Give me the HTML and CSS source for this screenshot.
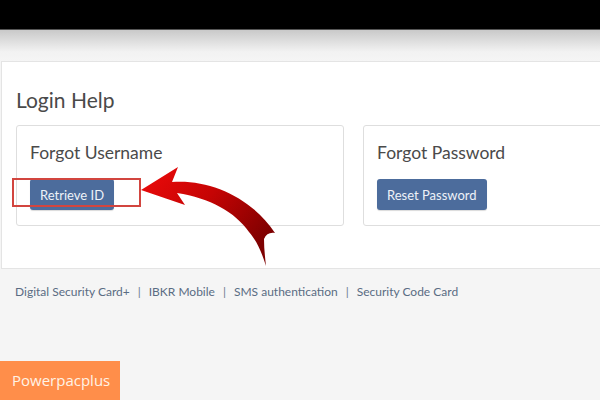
FILE: index.html
```html
<!DOCTYPE html>
<html>
<head>
<meta charset="utf-8">
<link rel="stylesheet" href="styles.css">
</head>
<body>
<header class="topbar"></header>
<div class="shade"></div>
<section class="panel">
  <h1 class="title">Login Help</h1>
  <div class="cards">
    <div class="card">
      <h2 class="card-title">Forgot Username</h2>
      <div class="btn-wrap">
        <button class="btn">Retrieve ID</button>
      </div>
    </div>
    <div class="card">
      <h2 class="card-title">Forgot Password</h2>
      <div class="btn-wrap">
        <button class="btn">Reset Password</button>
      </div>
    </div>
  </div>
</section>
<nav class="links">
  <a>Digital Security Card+</a><span class="sep">|</span><a>IBKR Mobile</a><span class="sep">|</span><a>SMS authentication</a><span class="sep">|</span><a>Security Code Card</a>
</nav>
<span class="highlight"></span>
<svg class="arrow" width="150" height="110" viewBox="0 0 150 110">
  <defs>
    <linearGradient id="ag" x1="0" y1="0" x2="1" y2="0.6">
      <stop offset="0" stop-color="#ee0b0b"/>
      <stop offset="0.5" stop-color="#c60404"/>
      <stop offset="1" stop-color="#7e0000"/>
    </linearGradient>
  </defs>
  <path fill="url(#ag)" d="M11,30 L48,7 L42,22 C80,19 122,38 145,73 C140,72 136,74 134,79 C134,88 135,97 136,106 C131,90 126,80 119,72 C105,52 80,38 47,33 L55,45 Z"/>
</svg>
<div class="badge">Powerpacplus</div>
</body>
</html>
```
FILE: styles.css
```css
html, body {
  margin: 0;
  padding: 0;
}
body {
  width: 600px;
  height: 400px;
  overflow: hidden;
  background: #f5f5f5;
  font-family: Lato, "Open Sans", sans-serif;
  position: relative;
}
.topbar {
  height: 29px;
  background: #000;
  border-bottom: 1px solid #555;
}
.shade {
  height: 31px;
  background: linear-gradient(#c9c9c9, #f2f2f2 70%, #f5f5f5);
}
.panel {
  margin-left: 1px;
  height: 208px;
  box-sizing: border-box;
  background: #fff;
  border: 1px solid #e4e4e4;
  border-right: none;
  overflow: hidden;
  padding: 25px 0 0 14px;
}
.title {
  margin: 0;
  font-weight: 400;
  font-size: 21px;
  line-height: 25px;
  color: #4a4a4a;
}
.cards {
  display: grid;
  grid-template-columns: 328px 328px;
  column-gap: 19px;
  margin-top: 13px;
}
.card {
  height: 101px;
  box-sizing: border-box;
  border: 1px solid #dedede;
  border-radius: 3px;
  padding: 16px 0 0 13px;
}
.card-title {
  margin: 0;
  font-weight: 400;
  font-size: 17.5px;
  line-height: 22px;
  color: #4a4a4a;
}
.btn-wrap {
  margin-top: 15px;
}
.btn {
  height: 31px;
  border: none;
  border-radius: 3px;
  background: #4c6c9c;
  color: #eef2f8;
  font-family: Lato, "Open Sans", sans-serif;
  font-size: 13px;
  padding: 0 10px;
  box-shadow: 0 1px 1px rgba(0,0,0,0.15);
}
.highlight {
  position: absolute;
  left: 12px;
  top: 178px;
  width: 129px;
  height: 29px;
  box-sizing: border-box;
  border: 2px solid #d2453f;
}
.arrow {
  position: absolute;
  left: 130px;
  top: 160px;
}
.links {
  padding: 15px 0 0 15px;
  font-size: 12px;
  color: #5a6c83;
  white-space: nowrap;
}
.links .sep {
  margin: 0 8px;
  color: #6a7a90;
}
.badge {
  position: absolute;
  left: 0;
  bottom: 0;
  width: 120px;
  height: 39px;
  box-sizing: border-box;
  background: #ff8e4a;
  color: #fff3e6;
  font-family: "Open Sans", sans-serif;
  font-size: 15px;
  line-height: 39px;
  padding-left: 12px;
}
```
